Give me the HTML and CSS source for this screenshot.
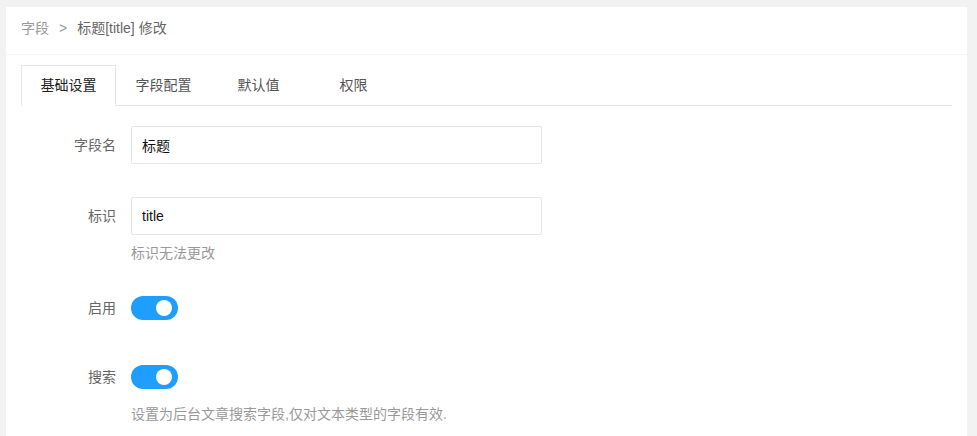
FILE: index.html
```html
<!DOCTYPE html>
<html lang="zh-CN">
<head>
<meta charset="utf-8">
<title>字段修改</title>
<link rel="stylesheet" href="styles.css">
</head>
<body>
<div class="card">
  <div class="card-header">
    <span class="crumb">字段</span><span class="sep">&gt;</span><span class="crumb-current">标题[title] 修改</span>
  </div>
  <div class="card-body">
    <ul class="tabs">
      <li class="tab active">基础设置</li>
      <li class="tab">字段配置</li>
      <li class="tab">默认值</li>
      <li class="tab">权限</li>
    </ul>
    <div class="form">
      <div class="item item-name">
        <label class="label">字段名</label>
        <div class="control"><input class="input" type="text" value="标题"></div>
      </div>
      <div class="item item-key">
        <label class="label">标识</label>
        <div class="control"><input class="input" type="text" value="title"></div>
        <div class="hint">标识无法更改</div>
      </div>
      <div class="item item-enable">
        <label class="label">启用</label>
        <div class="control"><span class="switch"><span class="knob"></span></span></div>
      </div>
      <div class="item item-search">
        <label class="label">搜索</label>
        <div class="control"><span class="switch"><span class="knob"></span></span></div>
        <div class="hint">设置为后台文章搜索字段,仅对文本类型的字段有效.</div>
      </div>
    </div>
  </div>
</div>
</body>
</html>
```
FILE: styles.css
```css
html, body {
  margin: 0;
  padding: 0;
  background: #f2f2f2;
}
body {
  padding: 7px 10px 0 6px;
  font-family: "Liberation Sans", "Noto Sans CJK SC", sans-serif;
  font-size: 14px;
  color: #666;
  height: 436px;
  box-sizing: border-box;
  overflow: hidden;
}
.card {
  background: #fff;
  height: 429px;
}
.card-header {
  height: 48px;
  box-sizing: border-box;
  padding: 11px 15px 0 15px;
  line-height: 20px;
  border-bottom: 1px solid #f6f6f6;
  display: flex;
  align-items: flex-start;
}
.crumb { color: #999; }
.sep { color: #999; margin: 0 10px; }
.crumb-current { color: #666; }
.card-body {
  padding: 10px 15px 0 15px;
}
.tabs {
  list-style: none;
  margin: 0;
  padding: 0;
  display: flex;
  height: 40px;
  border-bottom: 1px solid #e6e6e6;
}
.tab {
  width: 95px;
  height: 40px;
  line-height: 40px;
  text-align: center;
  color: #555;
  box-sizing: border-box;
}
.tab.active {
  color: #222;
  border: 1px solid #e6e6e6;
  border-bottom: 1px solid #fff;
  height: 41px;
  line-height: 38px;
  background: #fff;
}
.form {
  padding-top: 20px;
}
.item {
  display: grid;
  grid-template-columns: 110px 411px;
  align-items: center;
}
.label {
  grid-column: 1;
  text-align: right;
  padding-right: 15px;
  line-height: 20px;
  color: #666;
}
.control {
  grid-column: 2;
  height: 38px;
  display: flex;
  align-items: center;
}
.hint {
  grid-column: 2;
  white-space: nowrap;
  color: #999;
  line-height: 20px;
  margin-top: 8px;
}
.item-name { margin-bottom: 33px; }
.item-key { margin-bottom: 26px; }
.item-enable { margin-bottom: 31px; }
.input {
  width: 100%;
  height: 38px;
  box-sizing: border-box;
  border: 1px solid #e6e6e6;
  border-radius: 2px;
  padding: 0 10px;
  font-family: "Liberation Sans", "Noto Sans CJK SC", sans-serif;
  font-size: 14px;
  color: #111;
  outline: none;
  background: #fff;
}
.switch {
  position: relative;
  display: block;
  width: 47px;
  height: 24px;
  border-radius: 12px;
  background: #1e9fff;
}
.knob {
  position: absolute;
  top: 4px;
  left: calc(100% - 22px);
  width: 16px;
  height: 16px;
  border-radius: 50%;
  background: #fff;
}
```
